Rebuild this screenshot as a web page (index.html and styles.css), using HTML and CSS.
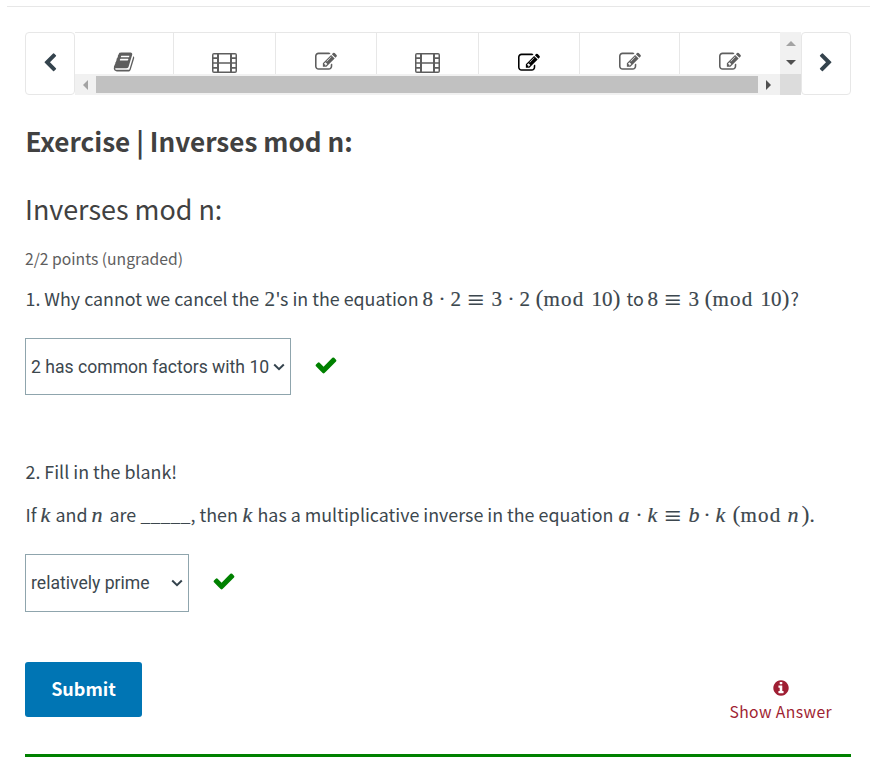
FILE: index.html
```html
<!DOCTYPE html>
<html lang="en">
<head>
<meta charset="utf-8">
<title>Inverses mod n</title>
<link rel="stylesheet" href="styles.css">
</head>
<body>
<svg class="defs" aria-hidden="true">
  <symbol id="left" viewBox="0 0 1792 1792"><path d="M1427 301l-531 531 531 531q19 19 19 45t-19 45l-166 166q-19 19-45 19t-45-19l-742-742q-19-19-19-45t19-45l742-742q19-19 45-19t45 19l166 166q19 19 19 45t-19 45z"/></symbol>
  <symbol id="book" viewBox="0 0 1792 1792"><path d="M1703 478q40 57 18 129l-275 906q-19 64-76.500 107.500t-122.500 43.500h-923q-77 0-148.500-53.500t-99.500-131.500q-24-67-2-127 0-4 3-27t4-37q1-8-3-21.500t-3-19.500q2-11 8-21t16.500-23.500 16.500-23.500q23-38 45-91.500t30-91.500q3-10 .5-30t-.5-28q3-11 17-28t17-23q21-36 42-92t25-90q1-9-2.500-32t.5-28q4-13 22-30.500t22-22.500q19-26 42.500-84.500t27.500-96.500q1-8-3-25.500t-2-26.500q2-8 9-18t18-23 17-21q8-12 16.500-30.500t15-35 16-36 19.500-32 26.500-23.500 36-11.500 47.500 5.500l-1 3q38-9 51-9h761q74 0 114 56t18 130l-274 906q-36 119-71.500 153.500t-128.500 34.500h-869q-27 0-38 15-11 16-1 43 24 70 144 70h923q29 0 56-15.500t35-41.500l300-987q7-22 5-57 38 15 59 43zm-1064 2q-4 13 2 22.500t20 9.500h608q13 0 25.500-9.500t16.500-22.500l21-64q4-13-2-22.500t-20-9.500h-608q-13 0-25.500 9.500t-16.500 22.500zm-83 256q-4 13 2 22.500t20 9.500h608q13 0 25.500-9.500t16.500-22.500l21-64q4-13-2-22.500t-20-9.500h-608q-13 0-25.500 9.500t-16.500 22.500z"/></symbol>
  <symbol id="film" viewBox="0 0 25 22"><path fill-rule="evenodd" d="M2 1H23Q25 1 25 3V19Q25 21 23 21H2Q0 21 0 19V3Q0 1 2 1ZM1.500 2.500V5.300H5V2.500ZM1.500 7V10.200H5V7ZM1.500 11.800V15H5V11.800ZM1.500 16.700V19.500H5V16.700ZM7 2.500V10.200H18V2.500ZM7 11.800V19.500H18V11.800ZM20 2.500V5.300H23.500V2.500ZM20 7V10.200H23.500V7ZM20 11.800V15H23.500V11.800ZM20 16.700V19.500H23.500V16.700Z"/></symbol>
  <symbol id="edit" viewBox="0 0 1792 1792"><path d="M888 1184l116-116-152-152-116 116v56h96v96h56zm440-720q-16-16-33 1l-350 350q-17 17-1 33t33-1l350-350q17-17 1-33zm80 594v190q0 119-84.500 203.500t-203.500 84.500h-832q-119 0-203.500-84.500t-84.500-203.500v-832q0-119 84.500-203.500t203.500-84.500h832q63 0 117 25 15 7 18 23 3 17-9 29l-49 49q-14 14-32 8-23-6-45-6h-832q-66 0-113 47t-47 113v832q0 66 47 113t113 47h832q66 0 113-47t47-113v-126q0-13 9-22l64-64q15-15 35-7t20 29zm-96-738l288 288-672 672h-288v-288zm444 132l-92 92-288-288 92-92q28-28 68-28t68 28l152 152q28 28 28 68t-28 68z"/></symbol>
  <symbol id="check" viewBox="0 0 1792 1792"><path d="M1671 566q0 40-28 68l-724 724-136 136q-28 28-68 28t-68-28l-136-136-362-362q-28-28-28-68t28-68l136-136q28-28 68-28t68 28l294 295 656-657q28-28 68-28t68 28l136 136q28 28 28 68z"/></symbol>
  <symbol id="info" viewBox="0 0 1792 1792"><path d="M1152 1376v-160q0-14-9-23t-23-9h-96v-512q0-14-9-23t-23-9h-320q-14 0-23 9t-9 23v160q0 14 9 23t23 9h96v320h-96q-14 0-23 9t-9 23v160q0 14 9 23t23 9h448q14 0 23-9t9-23zm-128-896v-160q0-14-9-23t-23-9h-192q-14 0-23 9t-9 23v160q0 14 9 23t23 9h192q14 0 23-9t9-23zm640 416q0 209-103 385.500t-279.500 279.500-385.500 103-385.500-103-279.500-279.500-103-385.500 103-385.500 279.500-279.500 385.500-103 385.500 103 279.500 279.500 103 385.500z"/></symbol>
</svg>
<main class="page">
  <nav class="sequence">
    <button class="step" aria-label="Previous"><svg class="chev"><use href="#left"/></svg></button>
    <div class="scroller">
      <div class="tabs">
        <span class="tab"><svg class="icon"><use href="#book"/></svg></span>
        <span class="tab"><svg class="film"><use href="#film"/></svg></span>
        <span class="tab"><svg class="icon"><use href="#edit"/></svg></span>
        <span class="tab"><svg class="film"><use href="#film"/></svg></span>
        <span class="tab active"><svg class="icon"><use href="#edit"/></svg></span>
        <span class="tab"><svg class="icon"><use href="#edit"/></svg></span>
        <span class="tab"><svg class="icon"><use href="#edit"/></svg></span>
      </div>
      <div class="vbar"><i class="up"></i><i class="down"></i></div>
      <div class="hbar"><i class="prev"></i><b class="thumb"></b><i class="next"></i></div>
      <div class="corner"></div>
    </div>
    <button class="step" aria-label="Next"><svg class="chev flip"><use href="#left"/></svg></button>
  </nav>
  <h2>Exercise | Inverses mod n:</h2>
  <h3>Inverses mod n:</h3>
  <div class="points">2/2 points (ungraded)</div>

  <p class="line first"><span class="t w239">1. Why cannot we cancel the</span><span class="m w11">2</span><span class="t w147">'s in the equation</span><span class="m w16">8</span><span class="m w12">·</span><span class="m w17">2</span><span class="m eq w24">≡</span><span class="m w16">3</span><span class="m w12">·</span><span class="m w16">2</span><span class="m par w8">(</span><span class="m mod w48">mod</span><span class="m w21">10</span><span class="m par w14">)</span><span class="t w21">to</span><span class="m w17">8</span><span class="m eq w24">≡</span><span class="m w16">3</span><span class="m par w8">(</span><span class="m mod w48">mod</span><span class="m w21">10</span><span class="m par w9">)</span><span class="t">?</span></p>
  <div class="answer"><div class="select wide">2 has common factors with 10<svg class="caret" viewBox="0 0 12 8"><path d="M1.200 1.500L6 6.200L10.800 1.500"/></svg></div><svg class="check"><use href="#check"/></svg></div>

  <p class="line second"><span class="t">2. Fill in the blank!</span></p>
  <p class="line third"><span class="t w15">If</span><span class="m it w15">k</span><span class="t w36">and</span><span class="m it w18">n</span><span class="t w31">are</span><span class="t blank w50">_____</span><span class="t w52">, then</span><span class="m it w15">k</span><span class="t w361">has a multiplicative inverse in the equation</span><span class="m it w17">a</span><span class="m w12">·</span><span class="m it w17">k</span><span class="m eq w24">≡</span><span class="m it w15">b</span><span class="m w12">·</span><span class="m it w17">k</span><span class="m par w8">(</span><span class="m mod w47">mod</span><span class="m it w14">n</span><span class="m par w8">)</span><span class="m">.</span></p>
  <div class="answer two"><div class="select narrow">relatively prime<svg class="caret" viewBox="0 0 12 8"><path d="M1.200 1.500L6 6.200L10.800 1.500"/></svg></div><svg class="check"><use href="#check"/></svg></div>

  <div class="actions">
    <button class="submit">Submit</button>
    <div class="show"><svg class="info"><use href="#info"/></svg><span>Show Answer</span></div>
  </div>
</main>
</body>
</html>
```
FILE: styles.css
```css
* { box-sizing: border-box; }
body { margin: 0; background: #fff; color: #414141; font-family: "Noto Sans CJK SC", "Open Sans", sans-serif; overflow: hidden; }
svg { display: block; fill: currentColor; flex: none; }
.defs { display: none; }
button { margin: 0; padding: 0; font: inherit; }
.page { margin: 6px 10px 0 7px; height: 751px; border-top: 1px solid #e7e7e7; padding: 25px 19px 0 18px; }

.sequence { display: flex; height: 63px; width: 826px; }
.step { display: flex; align-items: center; justify-content: center; width: 50px; border: 1px solid #e7e7e7; border-radius: 4px; background: #fff; color: #34434d; padding-bottom: 2px; }
.chev { width: 20px; height: 20px; }
.flip { transform: scaleX(-1); }
.scroller { display: grid; grid-template-columns: 705px 21px; grid-template-rows: 42px 21px; width: 726px; }
.tabs { display: grid; grid-template-columns: 99px 102px 101px 102px 101px 100px 100px; border-top: 1px solid #e7e7e7; }
.tab { display: flex; justify-content: center; align-items: flex-start; padding-top: 18px; border-right: 1px solid #e7e7e7; color: #5e5e5e; }
.tab:last-child { border-right: 0; }
.tab.active { color: #000; padding-top: 19px; }
.icon { width: 22px; height: 22px; }
.film { width: 25px; height: 22px; margin-top: 1px; }
.vbar { display: flex; flex-direction: column; align-items: center; background: #f1f1f1; padding-top: 9px; gap: 14px; }
.hbar { display: flex; align-items: center; background: #f1f1f1; padding: 2px 8px; }
.corner { background: #dcdcdc; }
.vbar i, .hbar i { width: 0; height: 0; border: 5px solid transparent; }
.vbar .up { border-top: 0; border-bottom-color: #a3a3a3; }
.vbar .down { border-bottom: 0; border-top-color: #505050; }
.hbar .prev { border-left: 0; border-right-color: #a3a3a3; }
.hbar .next { border-right: 0; border-left-color: #505050; }
.thumb { width: 662px; height: 17px; margin: 0 8px; background: #c1c1c1; }

h2, h3, p { margin: 0; white-space: nowrap; }
h2 { margin-top: 31px; padding-left: 0.500px; font-size: 26.100px; line-height: 30px; font-weight: 600; }
h3 { margin-top: 38px; font-size: 26.900px; line-height: 30px; font-weight: 400; }
.points { margin-top: 23px; font-size: 15.700px; line-height: 24px; color: #5e5e5e; }
.line { display: flex; align-items: baseline; height: 24px; line-height: 24px; padding-left: 0.500px; font-size: 17.850px; color: #3c474e; }
.first { margin-top: 15px; }
.second { margin-top: 64px; }
.third { margin-top: 19px; }
.m { font-family: "Liberation Serif", serif; font-size: 21px; -webkit-text-stroke: 0.200px; }
.it { font-size: 22px; font-style: italic; }
.par { font-size: 24px; -webkit-text-stroke: 0; }
.mod { letter-spacing: 1.200px; }
.eq { position: relative; top: 4px; font-size: 30px; line-height: 20px; -webkit-text-stroke: 0; }
.w8 { width: 8px; } .w9 { width: 9px; } .w11 { width: 11px; }
.w12 { width: 12px; } .w14 { width: 14px; } .w15 { width: 15px; } .w16 { width: 16px; }
.w17 { width: 17px; } .w18 { width: 18px; } .w21 { width: 21px; } .w24 { width: 24px; }
.w31 { width: 31px; } .w36 { width: 36px; } .w47 { width: 47px; } .w48 { width: 48px; }
.w50 { width: 50px; } .w52 { width: 52px; } .w147 { width: 147px; }
.w239 { width: 239px; } .w361 { width: 361px; }

.answer { display: flex; align-items: center; margin-top: 28px; height: 57px; color: #008100; }
.answer.two { height: 58px; }
.select { display: flex; align-items: center; justify-content: space-between; height: 100%; padding: 0 5px; border: 1px solid #8fa5ad; color: #3c474e; font-family: Roboto, sans-serif; font-size: 17.600px; white-space: nowrap; }
.wide { width: 266px; }
.narrow { width: 164px; }
.caret { width: 12px; height: 8px; fill: none; stroke: #34434d; stroke-width: 2; }
.check { width: 24px; height: 24px; margin: 0 0 4px 23px; }

.actions { display: flex; justify-content: space-between; height: 95px; margin-top: 50px; border-bottom: 3px solid #008100; }
.submit { width: 117px; height: 55px; border: 0; border-radius: 3px; padding-bottom: 3px; background: #0075b4; color: #fff; font-size: 18px; font-weight: 600; }
.show { display: flex; flex-direction: column; align-items: center; padding: 17px 19px 0 0; color: #9f1f33; font-size: 15.700px; line-height: 24px; letter-spacing: 0.400px; }
.info { width: 18px; height: 18px; margin-bottom: 3px; }
```
